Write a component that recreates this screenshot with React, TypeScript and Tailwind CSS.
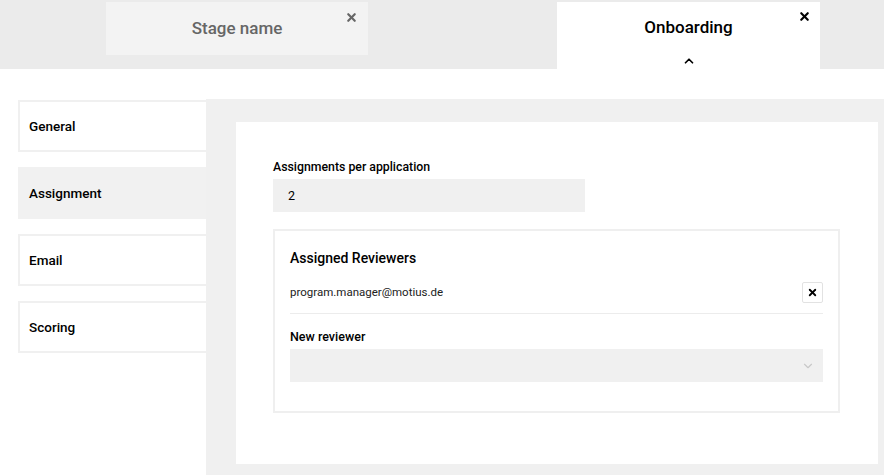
import { X, ChevronUp, ChevronDown } from "lucide-react";

const navItems = ["General", "Assignment", "Email", "Scoring"];

export default function App() {
  return (
    <div
      className="w-[884px] h-[475px] overflow-hidden bg-white text-black"
      style={{ fontFamily: "Roboto, 'Noto Sans', sans-serif" }}
    >
      {/* Stage tabs */}
      <div className="h-[69px] bg-[#ebebeb] flex items-start pt-[2px]">
        <div className="ml-[106px] w-[262px] h-[53px] bg-[#f3f3f3] relative flex items-center justify-center">
          <span className="text-[17px] text-[#666] font-medium">Stage name</span>
          <X className="absolute right-[10px] top-[9px] w-[13px] h-[13px] text-[#666]" strokeWidth={4} />
        </div>
        <div className="ml-[189px] w-[263px] h-[67px] bg-white relative flex flex-col items-center">
          <span className="text-[17px] font-medium mt-[13px]">Onboarding</span>
          <ChevronUp className="mt-[13px] w-[14px] h-[14px]" strokeWidth={3} />
          <X className="absolute right-[9px] top-[8px] w-[13px] h-[13px]" strokeWidth={4} />
        </div>
      </div>

      <div className="flex pt-[30px]">
        {/* Side nav */}
        <div className="w-[206px] pl-[18px] flex flex-col gap-[15px] pt-[1px]">
          {navItems.map((item) => (
            <div
              key={item}
              className={`h-[52px] flex items-center pl-[9px] text-[13.5px] font-medium border-2 border-r-0 ${
                item === "Assignment"
                  ? "bg-[#f1f1f1] border-[#f1f1f1]"
                  : "bg-white border-[#f0f0f0]"
              }`}
            >
              {item}
            </div>
          ))}
        </div>

        {/* Content */}
        <div className="flex-1 bg-[#f0f0f0] h-[376px] pl-[30px] pt-[23px] pr-[6px]">
          <div className="bg-white h-[342px] pl-[37px] pr-[38px] pt-[36px]">
            <div className="text-[12.3px] font-medium">Assignments per application</div>
            <div className="mt-[3px] w-[312px] h-[33px] bg-[#f0f0f0] flex items-center pl-[15px] text-[12.5px]">
              2
            </div>

            <div className="mt-[17px] border-2 border-[#efefef] px-[15px] pt-[17px] pb-[29px]">
              <div className="text-[14px] font-medium">Assigned Reviewers</div>
              <div className="mt-[13px] flex items-center justify-between pb-[10px] border-b border-[#ececec]">
                <span className="text-[11.5px] text-[#222]">program.manager@motius.de</span>
                <div className="w-[21px] h-[21px] border border-[#e2e2e2] rounded-[2px] flex items-center justify-center">
                  <X className="w-[11px] h-[11px]" strokeWidth={4} />
                </div>
              </div>
              <div className="mt-[14px] text-[12.5px] font-medium">New reviewer</div>
              <div className="mt-[2px] h-[33px] bg-[#f0f0f0] flex items-center justify-end pr-[8px]">
                <ChevronDown className="w-[14px] h-[14px] text-[#c8c8c8]" strokeWidth={2} />
              </div>
            </div>
          </div>
        </div>
      </div>
    </div>
  );
}
